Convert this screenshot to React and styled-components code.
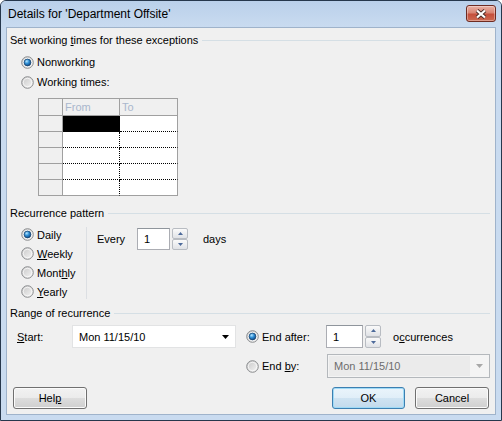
import React from 'react'
import styled, { createGlobalStyle } from 'styled-components'

const GlobalStyle = createGlobalStyle`
  html, body {
    margin: 0;
    padding: 0;
    background: #fff;
  }
  body {
    font-family: 'Liberation Sans', Arial, sans-serif;
    font-size: 11px;
    color: #000;
  }
  * {
    box-sizing: border-box;
  }
`

const Window = styled.div`
  width: 502px;
  height: 421px;
  border: 1px solid #26374c;
  border-radius: 6px 6px 0 0;
  background: #c9dbf0;
  display: flex;
  flex-direction: column;
  overflow: hidden;
`

const TitleBar = styled.div`
  height: 26px;
  flex: none;
  display: flex;
  align-items: flex-start;
  justify-content: space-between;
  padding: 0 5px 0 7px;
  background: linear-gradient(#bad0ea, #c9dbf0);
`

const Title = styled.span`
  font-size: 12px;
  line-height: 26px;
`

const CloseButton = styled.div`
  margin-top: 4px;
  width: 30px;
  height: 17px;
  border: 1px solid #6e2b22;
  border-radius: 3px;
  background: linear-gradient(#eab0a3 0%, #d98574 45%, #c54f3c 55%, #cd6a52 100%);
  box-shadow: inset 0 0 0 1px rgba(255, 255, 255, 0.35);
  display: flex;
  align-items: center;
  justify-content: center;
`

const Frame = styled.div`
  flex: 1;
  display: flex;
  padding: 0 5px 5px;
`

const Client = styled.div`
  flex: 1;
  border: 1px solid #9fb3cb;
  background: #f0f0f0;
  padding: 5px 5px 0 3px;
  display: flex;
  flex-direction: column;
`

const SectionHeader = styled.div`
  display: flex;
  align-items: center;
  gap: 4px;
  height: 14px;
  margin-top: ${p => p.$mt || 0}px;

  &::after {
    content: '';
    flex: 1;
    height: 1px;
    margin-top: 1px;
    background: #d5dfe5;
  }
`

const U = styled.span`
  text-decoration: underline;
`

const OptionList = styled.div`
  display: flex;
  flex-direction: column;
  padding-left: 11px;
  margin-top: ${p => p.$mt || 0}px;
  width: ${p => (p.$w ? `${p.$w}px` : 'auto')};
`

const RadioOption = styled.div`
  display: flex;
  align-items: center;
  gap: 3px;
  height: ${p => p.$h || 20}px;
  white-space: nowrap;
`

const RadioBox = styled.svg`
  flex: none;
  display: block;
`

const Radio = ({ checked }) => (
  <RadioBox width="13" height="13" viewBox="0 0 13 13">
    <defs>
      <linearGradient id="rbg" x1="0" y1="0" x2="1" y2="1">
        <stop offset="0" stopColor="#c6c6c6" />
        <stop offset="1" stopColor="#f7f7f7" />
      </linearGradient>
      <radialGradient id="rdot" cx="0.38" cy="0.32" r="0.75">
        <stop offset="0" stopColor="#b5e6ff" />
        <stop offset="0.45" stopColor="#2f8fd6" />
        <stop offset="1" stopColor="#0b3d74" />
      </radialGradient>
    </defs>
    <circle cx="6.5" cy="6.5" r="5.8" fill="url(#rbg)" stroke="#8c8e90" strokeWidth="1" />
    <circle cx="6.5" cy="6.5" r="4.2" fill="none" stroke="#fafafa" strokeWidth="0.8" />
    {checked && <circle cx="6.5" cy="6.5" r="3.4" fill="url(#rdot)" stroke="#163f6c" strokeWidth="0.7" />}
  </RadioBox>
)

/* working times grid */
const Grid = styled.div`
  margin: 6px 0 0 28px;
  display: grid;
  grid-template-columns: 24px 57px 58px;
  grid-auto-rows: 16px;
  width: 140px;
  border-top: 1px solid #a0a0a0;
  border-left: 1px solid #a0a0a0;
  & > :nth-child(-n + 3) {
    height: 17px;
  }
  grid-template-rows: 17px;
`

const RowHead = styled.div`
  border-right: 1px solid #a0a0a0;
  border-bottom: 1px solid #a0a0a0;
  background: #f0f0f0;
`

const ColHead = styled.div`
  border-right: 1px solid #a0a0a0;
  border-bottom: 1px solid #a0a0a0;
  color: #a9b7cd;
  padding-left: 2px;
  line-height: 16px;
`

const Cell = styled.div`
  background: ${p => (p.$selected ? '#000' : '#fff')};
  border-bottom: 1px ${p => (p.$last ? 'solid #a0a0a0' : 'dotted #000')};
  border-right: 1px ${p => (p.$to ? 'solid #a0a0a0' : 'dotted #000')};
`

const RecurrenceBody = styled.div`
  display: flex;
  margin-top: 5px;
`

const VSeparator = styled.div`
  width: 1px;
  height: 72px;
  margin-top: 2px;
  background: #dcdfe3;
`

const EveryRow = styled.div`
  display: flex;
  align-items: center;
  height: 22px;
  margin: 3px 0 0 10px;
`

const FieldLabel = styled.span`
  width: ${p => p.$w}px;
  flex: none;
  white-space: nowrap;
`

const NumberInput = styled.div`
  width: ${p => p.$w}px;
  height: 100%;
  background: #fff;
  border: 1px solid #abadb3;
  border-top-color: #8f959c;
  padding-left: 6px;
  display: flex;
  align-items: center;
`

const Spinner = styled.div`
  width: 16px;
  height: 100%;
  margin-left: 2px;
  display: flex;
  flex-direction: column;
`

const SpinButton = styled.div`
  flex: 1;
  border: 1px solid #b8bcc2;
  border-radius: 2px;
  background: linear-gradient(#fafafa, #e0e2e6);
  display: flex;
  align-items: center;
  justify-content: center;
`

const Arrow = ({ down, color = '#4d6a9a', w = 5, h = 3 }) => (
  <svg width={w} height={h} viewBox={`0 0 ${w} ${h}`} style={{ display: 'block' }}>
    <polygon points={down ? `0,0 ${w},0 ${w / 2},${h}` : `0,${h} ${w},${h} ${w / 2},0`} fill={color} />
  </svg>
)

const Unit = styled.span`
  margin-left: ${p => p.$ml}px;
`

const RangeBody = styled.div`
  display: flex;
  align-items: flex-start;
  margin-top: 5px;
`

const StartGroup = styled.div`
  display: flex;
  align-items: center;
  padding-left: 7px;
  height: 23px;
`

const Combo = styled.div`
  width: ${p => p.$w}px;
  height: ${p => p.$h}px;
  border: 1px solid ${p => (p.$disabled ? '#b4b8bc' : '#e2e3e4')};
  background: ${p => (p.$disabled ? '#f4f4f4' : '#fff')};
  color: ${p => (p.$disabled ? '#6d6d6d' : '#000')};
  display: flex;
  align-items: center;
  padding: 1px;
`

const ComboText = styled.div`
  flex: 1;
  height: 100%;
  display: flex;
  align-items: center;
  padding-left: 5px;
  background: ${p => (p.$disabled ? '#ebebeb' : 'transparent')};
`

const ComboButton = styled.div`
  width: 18px;
  display: flex;
  justify-content: center;
`

const EndGroup = styled.div`
  display: flex;
  flex-direction: column;
  gap: 6px;
  margin-left: 10px;
`

const EndRow = styled.div`
  display: flex;
  align-items: center;
  height: ${p => p.$h}px;
`

const RadioLabel = styled.div`
  display: flex;
  align-items: center;
  gap: 3px;
  width: ${p => p.$w}px;
  flex: none;
  white-space: nowrap;
`

const ButtonRow = styled.div`
  display: flex;
  align-items: center;
  margin-top: 9px;
  padding: 0 1px 0 3px;
`

const Button = styled.div`
  width: ${p => p.$w}px;
  height: 22px;
  margin-left: ${p => p.$ml || 0}px;
  border: 1px solid ${p => (p.$default ? '#3c7fb1' : '#707070')};
  border-radius: 3px;
  background: ${p =>
    p.$default
      ? 'linear-gradient(#eaf4fb 0%, #e0eef8 50%, #cfe3f2 51%, #c2daec 100%)'
      : 'linear-gradient(#f2f2f2 0%, #ebebeb 50%, #dddddd 51%, #cfcfcf 100%)'};
  box-shadow: inset 0 0 0 1px ${p => (p.$default ? '#9fdaf6' : '#fbfbfb')};
  display: flex;
  align-items: center;
  justify-content: center;
`

const Spacer = styled.div`
  flex: 1;
`

const ROWS = [0, 1, 2, 3, 4]

export default function App() {
  return (
    <>
      <GlobalStyle />
      <Window>
        <TitleBar>
          <Title>Details for 'Department Offsite'</Title>
          <CloseButton>
            <svg width="12" height="10" viewBox="0 0 12 10">
              <path d="M2 1.5 L10 8.5 M10 1.5 L2 8.5" stroke="#4a2a26" strokeWidth="4" />
              <path d="M2 1.5 L10 8.5 M10 1.5 L2 8.5" stroke="#fff" strokeWidth="2.2" />
            </svg>
          </CloseButton>
        </TitleBar>
        <Frame>
          <Client>
            <SectionHeader>
              <span>Set working <U>t</U>imes for these exceptions</span>
            </SectionHeader>
            <OptionList $mt={5}>
              <RadioOption><Radio checked />Nonworking</RadioOption>
              <RadioOption><Radio />Working times:</RadioOption>
            </OptionList>

            <Grid>
              <RowHead />
              <ColHead>From</ColHead>
              <ColHead>To</ColHead>
              {ROWS.map(i => (
                <React.Fragment key={i}>
                  <RowHead />
                  <Cell $selected={i === 0} $last={i === 4} />
                  <Cell $to $last={i === 4} />
                </React.Fragment>
              ))}
            </Grid>

            <SectionHeader $mt={10}>
              <span>Recurrence pattern</span>
            </SectionHeader>
            <RecurrenceBody>
              <OptionList $w={76}>
                <RadioOption $h={19}><Radio checked />Daily</RadioOption>
                <RadioOption $h={19}><Radio /><span><U>W</U>eekly</span></RadioOption>
                <RadioOption $h={19}><Radio /><span>Mont<U>h</U>ly</span></RadioOption>
                <RadioOption $h={19}><Radio /><span><U>Y</U>early</span></RadioOption>
              </OptionList>
              <VSeparator />
              <EveryRow>
                <FieldLabel $w={40}>Every</FieldLabel>
                <NumberInput $w={33}>1</NumberInput>
                <Spinner>
                  <SpinButton><Arrow /></SpinButton>
                  <SpinButton><Arrow down /></SpinButton>
                </Spinner>
                <Unit $ml={15}>days</Unit>
              </EveryRow>
            </RecurrenceBody>

            <SectionHeader $mt={5}>
              <span>Range of recurrence</span>
            </SectionHeader>
            <RangeBody>
              <StartGroup>
                <FieldLabel $w={55}><U>S</U>tart:</FieldLabel>
                <Combo $w={164} $h={23}>
                  <ComboText>Mon 11/15/10</ComboText>
                  <ComboButton><Arrow down color="#000" w={7} h={4} /></ComboButton>
                </Combo>
              </StartGroup>
              <EndGroup>
                <EndRow $h={23}>
                  <RadioLabel $w={80}><Radio checked />End after:</RadioLabel>
                  <NumberInput $w={37}>1</NumberInput>
                  <Spinner>
                    <SpinButton><Arrow /></SpinButton>
                    <SpinButton><Arrow down /></SpinButton>
                  </Spinner>
                  <Unit $ml={12}>o<U>c</U>currences</Unit>
                </EndRow>
                <EndRow $h={24}>
                  <RadioLabel $w={81}><Radio /><span>End <U>b</U>y:</span></RadioLabel>
                  <Combo $w={163} $h={24} $disabled>
                    <ComboText $disabled>Mon 11/15/10</ComboText>
                    <ComboButton><Arrow down color="#a8a8a8" w={7} h={4} /></ComboButton>
                  </Combo>
                </EndRow>
              </EndGroup>
            </RangeBody>

            <ButtonRow>
              <Button $w={74}><span>Hel<U>p</U></span></Button>
              <Spacer />
              <Button $w={73} $default>OK</Button>
              <Button $w={74} $ml={10}>Cancel</Button>
            </ButtonRow>
          </Client>
        </Frame>
      </Window>
    </>
  )
}
